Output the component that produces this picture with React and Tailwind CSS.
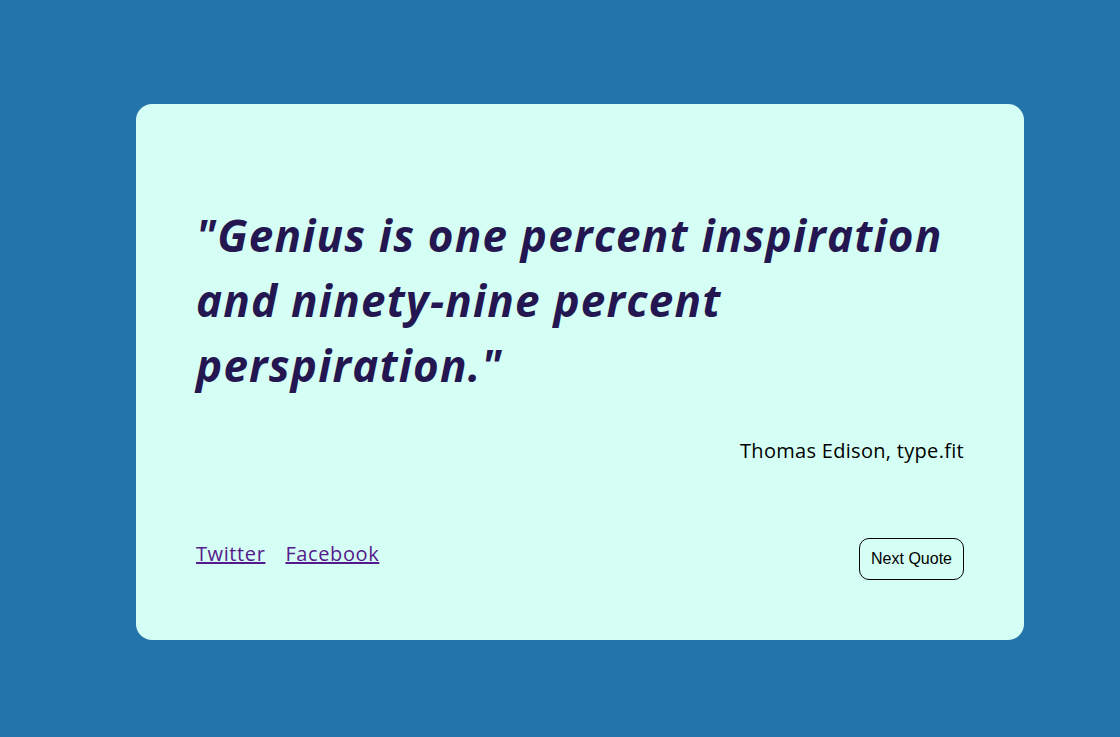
const quote = {
  text: "Genius is one percent inspiration and ninety-nine percent perspiration.",
  author: "Thomas Edison, type.fit",
};

const App = () => {
  return (
    <div className="min-h-[737px] w-full bg-[#2374ab] pt-[104px] pl-[136px]">
      <div className="w-[888px] h-[536px] rounded-[16px] bg-[#d5fff4] px-[60px] pt-[99px] flex flex-col">
        <h1 className="text-[44px] leading-[65px] font-bold italic text-[#231651] tracking-[1.2px] [font-family:'Open_Sans',sans-serif]">
          "{quote.text}"
        </h1>
        <p className="mt-[38px] text-right text-[20px] tracking-[0.3px] text-black [font-family:'Open_Sans',sans-serif]">
          {quote.author}
        </p>
        <div className="mt-[72px] flex items-center justify-between">
          <div className="flex gap-[20px] text-[20px] tracking-[0.6px] [font-family:'Open_Sans',sans-serif] -mt-[10px]">
            <a href="#" className="underline text-[#551a8b]">Twitter</a>
            <a href="#" className="underline text-[#551a8b]">Facebook</a>
          </div>
          <button className="h-[42px] px-[11px] border border-black rounded-[10px] text-[16px] text-black [font-family:'Liberation_Sans',Arial,sans-serif]">
            Next Quote
          </button>
        </div>
      </div>
    </div>
  );
};

export default App;
